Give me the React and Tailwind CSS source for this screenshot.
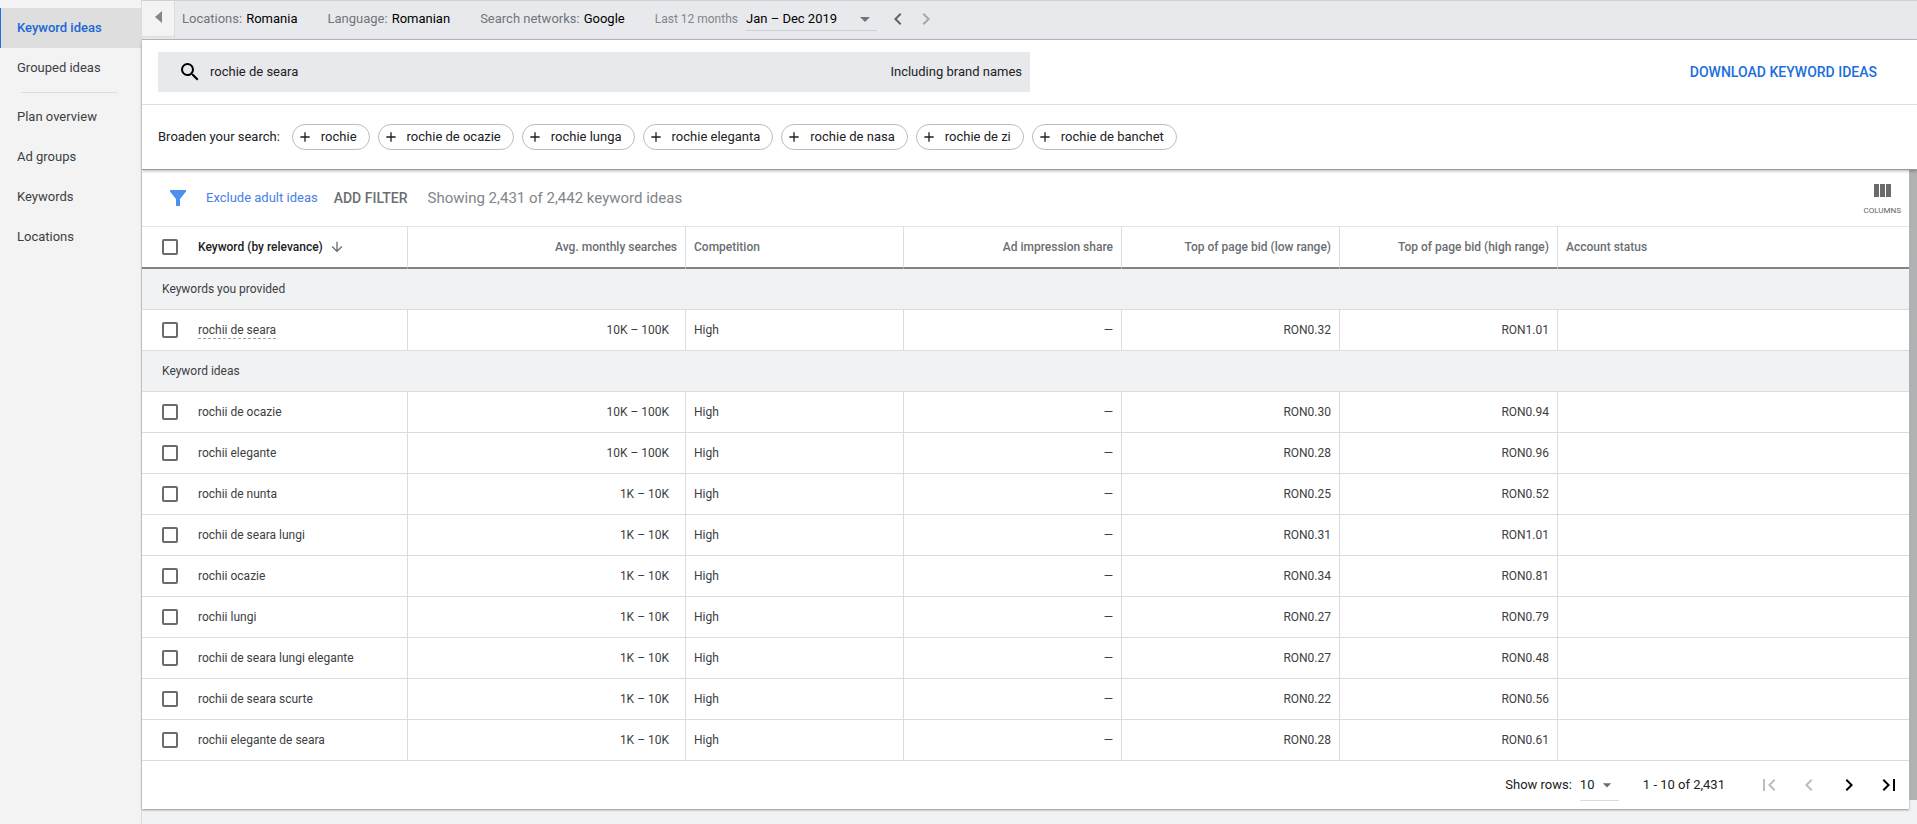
import React, { useState } from 'react';
import {
  MdAdd,
  MdArrowDownward,
  MdArrowDropDown,
  MdChevronLeft,
  MdChevronRight,
  MdFirstPage,
  MdLastPage,
  MdSearch,
} from 'react-icons/md';

const NAV_TOP = ['Keyword ideas', 'Grouped ideas'];
const NAV_PLAN = ['Plan overview', 'Ad groups', 'Keywords', 'Locations'];

const SETTINGS = [
  { label: 'Locations:', value: 'Romania' },
  { label: 'Language:', value: 'Romanian' },
  { label: 'Search networks:', value: 'Google' },
];

const BROADEN = [
  'rochie',
  'rochie de ocazie',
  'rochie lunga',
  'rochie eleganta',
  'rochie de nasa',
  'rochie de zi',
  'rochie de banchet',
];

const PROVIDED = [
  { keyword: 'rochii de seara', searches: '10K – 100K', low: 'RON0.32', high: 'RON1.01' },
];

const IDEAS = [
  { keyword: 'rochii de ocazie', searches: '10K – 100K', low: 'RON0.30', high: 'RON0.94' },
  { keyword: 'rochii elegante', searches: '10K – 100K', low: 'RON0.28', high: 'RON0.96' },
  { keyword: 'rochii de nunta', searches: '1K – 10K', low: 'RON0.25', high: 'RON0.52' },
  { keyword: 'rochii de seara lungi', searches: '1K – 10K', low: 'RON0.31', high: 'RON1.01' },
  { keyword: 'rochii ocazie', searches: '1K – 10K', low: 'RON0.34', high: 'RON0.81' },
  { keyword: 'rochii lungi', searches: '1K – 10K', low: 'RON0.27', high: 'RON0.79' },
  { keyword: 'rochii de seara lungi elegante', searches: '1K – 10K', low: 'RON0.27', high: 'RON0.48' },
  { keyword: 'rochii de seara scurte', searches: '1K – 10K', low: 'RON0.22', high: 'RON0.56' },
  { keyword: 'rochii elegante de seara', searches: '1K – 10K', low: 'RON0.28', high: 'RON0.61' },
];

const NavItem = ({ label, active }) => (
  <a
    href="#"
    aria-current={active ? 'page' : undefined}
    className={
      active
        ? 'flex h-10 items-center border-l border-[#1a73e8] bg-[#dedede] pl-4 font-medium text-[#1a67d6]'
        : 'flex h-10 items-center border-l border-transparent pl-4 text-[#3c4043]'
    }
  >
    {label}
  </a>
);

const Sidebar = () => (
  <nav className="w-[142px] shrink-0 border-r border-[#dadce0] bg-[#f3f3f3] pt-2 text-[13px]">
    {NAV_TOP.map((label, i) => (
      <NavItem key={label} label={label} active={i === 0} />
    ))}
    <hr className="mt-1 mr-6 mb-1 ml-[21px] border-[#dadce0]" />
    {NAV_PLAN.map((label) => (
      <NavItem key={label} label={label} />
    ))}
  </nav>
);

const SettingsBar = () => (
  <div className="flex h-10 border-y border-t-[#cfd0d4] border-b-[#bdbdbd] bg-[#e8e9ec] text-[13px]">
    <button
      type="button"
      aria-label="Collapse menu"
      className="flex h-9 w-[33px] items-center justify-center border-r border-b border-[#dadce0] bg-[#f3f3f3] pb-1"
    >
      <svg width="7" height="12" viewBox="0 0 7 12" fill="#80868b" aria-hidden="true">
        <path d="M7 0v12L0 6z" />
      </svg>
    </button>

    <div className="flex h-9 items-center pl-[7px]">
      {SETTINGS.map(({ label, value }) => (
        <a key={label} href="#" className="mr-[30px] flex gap-1 text-black">
          <span className="text-[#70757a]">{label}</span>
          {value}
        </a>
      ))}
      <span className="mr-2 text-xs text-[#80868b]">Last 12 months</span>
      <button
        type="button"
        className="flex h-6 w-[131px] items-center justify-between border-b border-[#cfd0d4] text-black"
      >
        Jan – Dec 2019
        <MdArrowDropDown size={24} className="text-[#70757a]" />
      </button>
      <button type="button" aria-label="Previous period" className="ml-[9px] text-[#5f6368]">
        <MdChevronLeft size={24} />
      </button>
      <button type="button" aria-label="Next period" className="ml-1 text-[#a5a8ac]">
        <MdChevronRight size={24} />
      </button>
    </div>
  </div>
);

const SearchPanel = () => {
  const [query, setQuery] = useState('rochie de seara');

  return (
    <header className="relative z-10 border-b border-[#9a9c9e] bg-white text-[13px] text-[#202124] shadow-[0_1px_3px_rgba(0,0,0,0.3)]">
      <div className="flex items-center justify-between border-b border-[#dfe0e2] py-3 pr-10 pl-4">
        <div className="flex h-10 w-full max-w-[872px] items-center bg-[#e8e9ed] pr-2 pl-5">
          <MdSearch size={24} className="shrink-0 text-black" aria-hidden="true" />
          <input
            type="text"
            aria-label="Search keywords"
            value={query}
            onChange={(e) => setQuery(e.target.value)}
            className="ml-2 min-w-0 flex-1 bg-transparent outline-none"
          />
          <span>Including brand names</span>
        </div>
        <button type="button" className="shrink-0 text-sm font-medium text-[#1a6fdc]">
          DOWNLOAD KEYWORD IDEAS
        </button>
      </div>

      <div className="flex h-16 items-center gap-2 pl-4">
        <span className="mr-1">Broaden your search:</span>
        {BROADEN.map((term) => (
          <button
            key={term}
            type="button"
            className="flex h-[26px] items-center rounded-full border border-[#bdbdbd] pr-3 pl-1"
          >
            <MdAdd size={16} className="mr-2" aria-hidden="true" />
            {term}
          </button>
        ))}
      </div>
    </header>
  );
};

const FilterBar = () => (
  <div className="flex h-14 items-center pl-7">
    <svg width="16" height="16" viewBox="0 0 16 16" fill="#4a90ee" aria-hidden="true">
      <path d="M0 0h16v1.5L10 9v7H6V9L0 1.5z" />
    </svg>
    <a href="#" className="ml-5 text-[13px] text-[#4a80e8]">
      Exclude adult ideas
    </a>
    <button type="button" className="ml-4 text-sm font-medium text-[#6b6e72]">
      ADD FILTER
    </button>
    <span className="ml-5 text-[15px] text-[#80868b]">Showing 2,431 of 2,442 keyword ideas</span>
    <button
      type="button"
      className="mr-2 ml-auto flex flex-col items-center gap-2 pt-1 text-[8px] text-[#5f6368]"
    >
      <svg width="17" height="13" viewBox="0 0 17 13" fill="#6b6b6b" aria-hidden="true">
        <path d="M0 0h5v13H0zM6 0h5v13H6zM12 0h5v13h-5z" />
      </svg>
      COLUMNS
    </button>
  </div>
);

const Checkbox = ({ label }) => (
  <input
    type="checkbox"
    aria-label={label}
    className="block size-4 shrink-0 appearance-none rounded-[2px] border-2 border-[#6b6b6b] bg-white checked:bg-[#1a73e8]"
  />
);

const GroupRow = ({ title }) => (
  <tr className="h-[41px] bg-[#f1f2f4]">
    <th colSpan={7} scope="colgroup" className="border-b border-[#dadce0] pl-5 text-left font-normal">
      {title}
    </th>
  </tr>
);

const KeywordRow = ({ row, underlined }) => (
  <tr className="h-[41px] [&>td]:border-r [&>td]:border-b [&>td]:border-[#dadce0] [&>td:last-child]:border-r-0">
    <td className="pl-5">
      <div className="flex items-center gap-5">
        <Checkbox label={row.keyword} />
        <span className={underlined ? 'border-b border-dashed border-[#9aa0a6]' : undefined}>
          {row.keyword}
        </span>
      </div>
    </td>
    <td className="pr-4 text-right">{row.searches}</td>
    <td className="pl-2">High</td>
    <td className="pr-2 text-right">—</td>
    <td className="pr-2 text-right">{row.low}</td>
    <td className="pr-2 text-right">{row.high}</td>
    <td />
  </tr>
);

const KeywordTable = () => (
  <table className="w-full table-fixed border-separate border-spacing-0 text-xs text-[#3c4043]">
    <colgroup>
      <col className="w-[266px]" />
      <col className="w-[278px]" />
      <col className="w-[218px]" />
      <col className="w-[218px]" />
      <col className="w-[218px]" />
      <col className="w-[218px]" />
      <col />
    </colgroup>
    <thead>
      <tr className="h-[43px] text-[#6b6e72] [&>th]:border-t [&>th]:border-b-2 [&>th]:border-t-[#e4e5e7] [&>th]:border-r-[#dadce0] [&>th]:border-b-[#838383] [&>th]:font-medium">
        <th className="border-r pl-5 text-left text-[#202124]">
          <div className="flex items-center">
            <Checkbox label="Select all keywords" />
            <span className="ml-5">Keyword (by relevance)</span>
            <MdArrowDownward size={16} className="ml-[6px] text-[#6b6e72]" aria-hidden="true" />
          </div>
        </th>
        <th className="border-r pr-2 text-right">Avg. monthly searches</th>
        <th className="border-r pl-2 text-left">Competition</th>
        <th className="border-r pr-2 text-right">Ad impression share</th>
        <th className="border-r pr-2 text-right">Top of page bid (low range)</th>
        <th className="border-r pr-2 text-right">Top of page bid (high range)</th>
        <th className="pl-2 text-left">Account status</th>
      </tr>
    </thead>
    <tbody>
      <GroupRow title="Keywords you provided" />
      {PROVIDED.map((row) => (
        <KeywordRow key={row.keyword} row={row} underlined />
      ))}
      <GroupRow title="Keyword ideas" />
      {IDEAS.map((row) => (
        <KeywordRow key={row.keyword} row={row} />
      ))}
    </tbody>
  </table>
);

const Pagination = () => (
  <div className="flex h-12 items-center justify-end pr-2 text-[13px] text-[#202124]">
    <label htmlFor="rows">Show rows:</label>
    <div className="relative mr-6 ml-2 h-8 w-[39px] border-b border-[#dadce0]">
      <select
        id="rows"
        defaultValue="10"
        className="h-full w-full appearance-none bg-transparent outline-none"
      >
        <option>10</option>
        <option>30</option>
        <option>50</option>
      </select>
      <MdArrowDropDown
        size={20}
        className="pointer-events-none absolute top-[6px] right-[2px] text-[#6b6e72]"
      />
    </div>
    <span className="mr-8">1 - 10 of 2,431</span>
    <div className="flex gap-4 text-black">
      <button type="button" aria-label="First page" className="text-[#bdbdbd]">
        <MdFirstPage size={24} />
      </button>
      <button type="button" aria-label="Previous page" className="text-[#bdbdbd]">
        <MdChevronLeft size={24} />
      </button>
      <button type="button" aria-label="Next page">
        <MdChevronRight size={24} />
      </button>
      <button type="button" aria-label="Last page">
        <MdLastPage size={24} />
      </button>
    </div>
  </div>
);

export default function App() {
  return (
    <div className="flex min-h-screen bg-[#f1f2f4] font-[Roboto,sans-serif]">
      <Sidebar />
      <div className="flex min-w-0 flex-1 flex-col">
        <SettingsBar />
        <SearchPanel />
        <div className="flex flex-1">
          <main className="min-w-0 flex-1">
            <div className="bg-white shadow-[0_1px_2px_rgba(0,0,0,0.4)]">
              <FilterBar />
              <KeywordTable />
              <Pagination />
            </div>
          </main>
          {/* scroll thumb */}
          <div className="mb-6 w-2 bg-[#b0b1b3]" />
        </div>
      </div>
    </div>
  );
}
